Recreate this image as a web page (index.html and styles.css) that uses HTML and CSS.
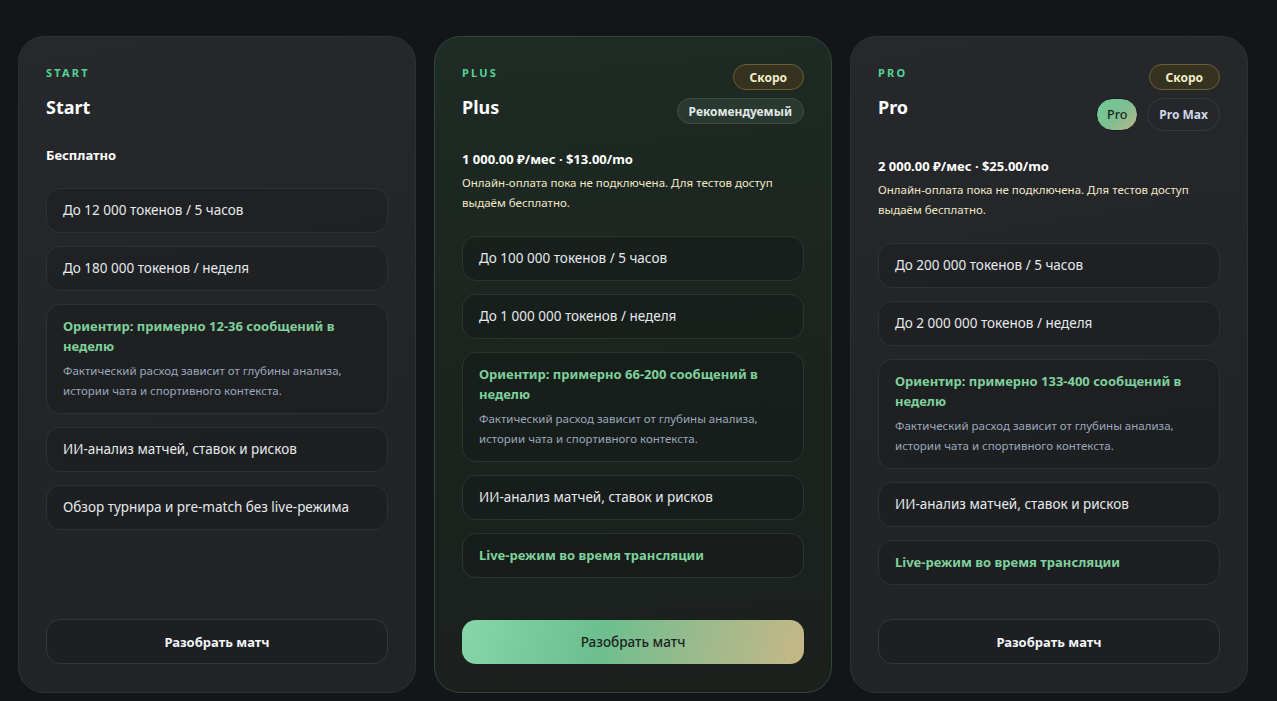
FILE: index.html
```html
<!DOCTYPE html>
<html lang="ru">
<head>
<meta charset="utf-8">
<title>Тарифы</title>
<link rel="stylesheet" href="styles.css">
</head>
<body>
<main class="plans">
  <section class="card">
    <div class="head">
      <div class="head-left">
        <div class="tier">START</div>
        <h2 class="name">Start</h2>
      </div>
    </div>
    <div class="price">Бесплатно</div>
    <ul class="features">
      <li class="feat">До 12 000 токенов / 5 часов</li>
      <li class="feat">До 180 000 токенов / неделя</li>
      <li class="feat rich">
        <div class="rich-title">Ориентир: примерно 12-36 сообщений в неделю</div>
        <div class="rich-desc">Фактический расход зависит от глубины анализа, истории чата и спортивного контекста.</div>
      </li>
      <li class="feat">ИИ-анализ матчей, ставок и рисков</li>
      <li class="feat">Обзор турнира и pre-match без live-режима</li>
    </ul>
    <button class="cta">Разобрать матч</button>
  </section>

  <section class="card card-featured">
    <div class="head">
      <div class="head-left">
        <div class="tier">PLUS</div>
        <h2 class="name">Plus</h2>
      </div>
      <div class="head-right">
        <span class="badge badge-soon">Скоро</span>
        <span class="badge badge-rec">Рекомендуемый</span>
      </div>
    </div>
    <div class="price">1 000.00 ₽/мес · $13.00/mo</div>
    <p class="note">Онлайн-оплата пока не подключена. Для тестов доступ выдаём бесплатно.</p>
    <ul class="features">
      <li class="feat">До 100 000 токенов / 5 часов</li>
      <li class="feat">До 1 000 000 токенов / неделя</li>
      <li class="feat rich">
        <div class="rich-title">Ориентир: примерно 66-200 сообщений в неделю</div>
        <div class="rich-desc">Фактический расход зависит от глубины анализа, истории чата и спортивного контекста.</div>
      </li>
      <li class="feat">ИИ-анализ матчей, ставок и рисков</li>
      <li class="feat accent">Live-режим во время трансляции</li>
    </ul>
    <button class="cta cta-primary">Разобрать матч</button>
  </section>

  <section class="card">
    <div class="head">
      <div class="head-left">
        <div class="tier">PRO</div>
        <h2 class="name">Pro</h2>
      </div>
      <div class="head-right">
        <span class="badge badge-soon">Скоро</span>
        <div class="toggle">
          <span class="pill pill-active">Pro</span>
          <span class="pill">Pro Max</span>
        </div>
      </div>
    </div>
    <div class="price">2 000.00 ₽/мес · $25.00/mo</div>
    <p class="note">Онлайн-оплата пока не подключена. Для тестов доступ выдаём бесплатно.</p>
    <ul class="features">
      <li class="feat">До 200 000 токенов / 5 часов</li>
      <li class="feat">До 2 000 000 токенов / неделя</li>
      <li class="feat rich">
        <div class="rich-title">Ориентир: примерно 133-400 сообщений в неделю</div>
        <div class="rich-desc">Фактический расход зависит от глубины анализа, истории чата и спортивного контекста.</div>
      </li>
      <li class="feat">ИИ-анализ матчей, ставок и рисков</li>
      <li class="feat accent">Live-режим во время трансляции</li>
    </ul>
    <button class="cta">Разобрать матч</button>
  </section>
</main>
</body>
</html>
```

FILE: styles.css
```css
* { box-sizing: border-box; }

html, body {
  margin: 0;
  padding: 0;
  background: #131518;
  font-family: "Noto Sans", "Open Sans", Arial, sans-serif;
  color: #e8eaee;
}

.plans {
  display: grid;
  grid-template-columns: repeat(3, 398px);
  gap: 18px;
  padding: 36px 18px 20px;
  align-items: stretch;
}

.card {
  display: flex;
  flex-direction: column;
  border: 1px solid #2e3033;
  border-radius: 26px;
  padding: 27px 27px 28px;
  background: linear-gradient(170deg, #26282b 0%, #222427 60%, #212326 100%);
}

.card-featured {
  border-color: #2f4638;
  background: linear-gradient(175deg, #1f2b25 0%, #1c241f 45%, #1b201d 100%);
}

.head {
  display: flex;
  justify-content: space-between;
  align-items: flex-start;
}

.head-left {
  display: flex;
  flex-direction: column;
  gap: 12px;
}

.head-right {
  display: flex;
  flex-direction: column;
  align-items: flex-end;
  gap: 8px;
}

.tier {
  font-size: 11px;
  line-height: 18px;
  font-weight: 700;
  letter-spacing: 2.2px;
  color: #55d397;
}

.name {
  margin: 0;
  font-size: 18px;
  line-height: 26px;
  font-weight: 700;
  color: #ffffff;
}

.badge {
  display: inline-flex;
  align-items: center;
  justify-content: center;
  height: 26px;
  padding: 0 16px;
  border-radius: 13px;
  font-size: 12px;
  font-weight: 700;
}

.badge-soon {
  background: #363220;
  border: 1px solid #6b5e31;
  color: #f5edc9;
}

.badge-rec {
  padding: 0 11px;
  background: #2a3832;
  border: 1px solid #3d4e46;
  color: #e1eae5;
}

.toggle {
  display: flex;
  gap: 9px;
}

.pill {
  display: inline-flex;
  align-items: center;
  justify-content: center;
  height: 33px;
  padding: 0 11px;
  border-radius: 17px;
  border: 1px solid #37393d;
  font-size: 12px;
  font-weight: 700;
  color: #d0d8ea;
}

.pill-active {
  padding: 0 10px;
  border-color: #1a1c1e;
  background: linear-gradient(135deg, #6fcb98 0%, #7cbf92 50%, #bcb687 100%);
  color: #1c2520;
  font-size: 12.5px;
  font-weight: 500;
}

.price {
  margin-top: 25px;
  font-size: 13px;
  line-height: 20px;
  font-weight: 700;
  color: #ffffff;
}

.note {
  margin: 4px 0 0;
  font-size: 11.5px;
  line-height: 20px;
  color: #f1e8c8;
}

.features {
  list-style: none;
  margin: 23px 0 34px;
  padding: 0;
  display: flex;
  flex-direction: column;
  gap: 13px;
}

.feat {
  border: 1px solid #2e3033;
  border-radius: 14px;
  background: rgba(10, 11, 12, 0.18);
  padding: 11px 16px;
  font-size: 13.5px;
  line-height: 21px;
  color: #e6e9ee;
}

.feat.rich {
  padding-bottom: 12px;
}

.card-featured .feat {
  border-color: #2b3530;
  background: rgba(10, 14, 12, 0.22);
}

.feat.accent {
  color: #7fd09c;
  font-weight: 700;
  font-size: 13px;
}

.rich-title {
  font-size: 13px;
  line-height: 20px;
  font-weight: 700;
  color: #7fd09c;
}

.rich-desc {
  margin-top: 5px;
  font-size: 11.5px;
  line-height: 20px;
  color: #9ba8be;
}

.cta {
  margin-top: auto;
  height: 45px;
  width: 100%;
  flex-shrink: 0;
  border-radius: 14px;
  border: 1px solid #35373b;
  background: rgba(10, 11, 12, 0.15);
  color: #f2f4f7;
  font-family: inherit;
  font-size: 13px;
  font-weight: 700;
  cursor: pointer;
}

.cta-primary {
  border: none;
  height: 44px;
  background: linear-gradient(105deg, #86d6a9 0%, #6cbf8e 40%, #9dba8d 70%, #c6b785 100%);
  color: #1c231f;
  font-size: 13.5px;
  font-weight: 500;
}
```
